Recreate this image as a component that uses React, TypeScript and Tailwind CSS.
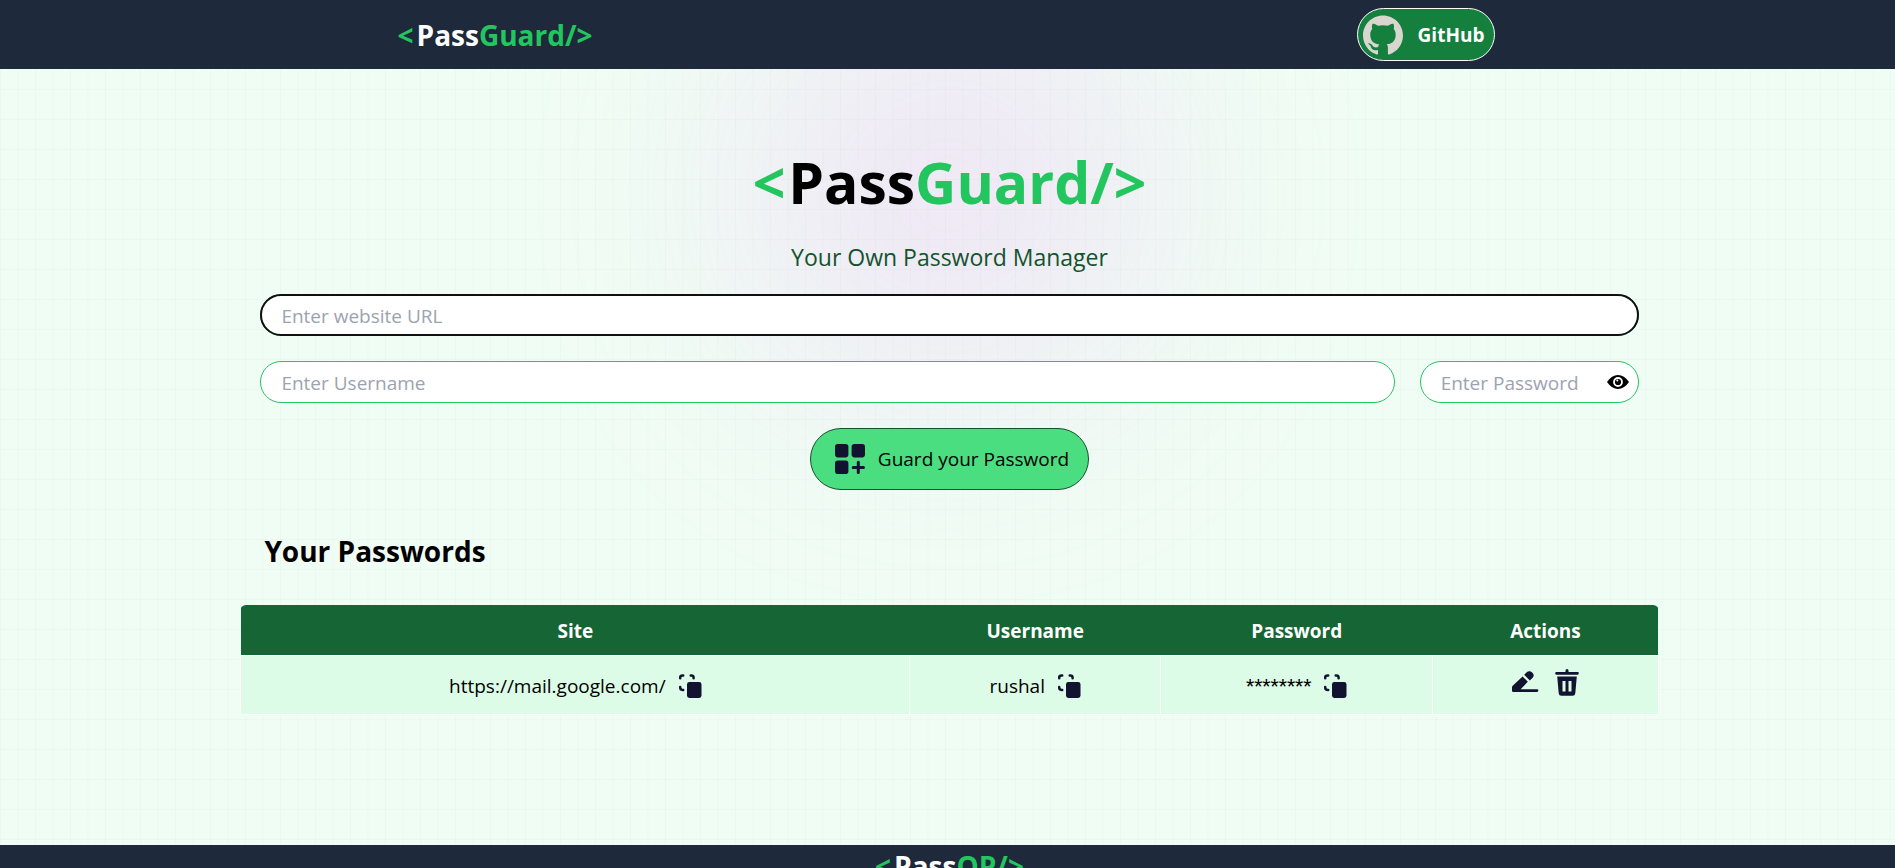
import { useState } from "react";
import { SiGithub } from "react-icons/si";

type Entry = { site: string; username: string; password: string };

const entries: Entry[] = [
  { site: "https://mail.google.com/", username: "rushal", password: "********" },
];

function EyeIcon() {
  return (
    <svg viewBox="0 0 22 14" className="h-[14px] w-[22px]" fill="black" aria-hidden="true">
      <path d="M0 7Q4.800 0 11 0t11 7q-4.800 7-11 7T0 7z" />
      <circle cx="11" cy="7" r="4" fill="black" stroke="white" strokeWidth="1.800" />
      <circle cx="10.300" cy="5.600" r="1" fill="white" />
    </svg>
  );
}

function CopyIcon() {
  return (
    <svg viewBox="0 0 24 26" className="h-[26px] w-6" fill="none" aria-hidden="true">
      <path
        d="M2.200 5.200V4.500Q2.200 2.400 4.500 2.400H5.200M12.700 2.400h.6Q15.600 2.400 15.600 4.500v.7M2.200 14v.6Q2.200 16.900 4.500 16.900h.7"
        stroke="#121331"
        strokeWidth="2.500"
        strokeLinecap="round"
      />
      <rect x="9" y="9" width="14.500" height="16" rx="2.400" fill="#121331" />
    </svg>
  );
}

function AddIcon() {
  return (
    <svg viewBox="0 0 30 30" className="h-[30px] w-[30px]" fill="#121331" aria-hidden="true">
      <rect width="13.400" height="13.400" rx="2.800" />
      <rect x="16.600" width="13.400" height="13.400" rx="2.800" />
      <rect y="16.600" width="13.400" height="13.400" rx="2.800" />
      <path d="M23.300 18.300v10.200M18.200 23.400h10.300" stroke="#121331" strokeWidth="3" strokeLinecap="round" />
    </svg>
  );
}

function EditIcon() {
  return (
    <svg viewBox="0 0 28 24" className="h-6 w-7" fill="#121331" aria-hidden="true">
      <path d="M11.600 6.400l5.200 5.400-7.200 7.400H26a1.400 1.400 0 0 1 0 2.800H2.200A1.200 1.200 0 0 1 1 20.800v-3.300q0-1 .7-1.700z" />
      <path d="M13.200 4.800l2.300-2.400a3.900 3.900 0 0 1 5.600 0l.3.300a3.900 3.900 0 0 1 0 5.400l-2.600 2.400z" />
    </svg>
  );
}

function TrashIcon() {
  return (
    <svg viewBox="0 0 24 27" className="h-[27px] w-6" fill="#121331" aria-hidden="true">
      <path d="M10.500 3V1.500a1.500 1.500 0 0 1 3 0V3h9a1.300 1.300 0 0 1 0 2.700h-21a1.300 1.300 0 0 1 0-2.700z" />
      <path
        fillRule="evenodd"
        d="M2.200 7.500h19.600l-1.500 16.700a2.800 2.800 0 0 1-2.800 2.500h-11a2.800 2.800 0 0 1-2.800-2.500zM7.500 12v10.500h3V12zM13.500 12v10.500h3V12z"
      />
    </svg>
  );
}

const field =
  "h-[42px] min-w-0 rounded-full bg-white pl-5 pt-[2px] text-[19px] text-black placeholder-[#9ca3af] border border-[#22c55e] outline-none";
const cell = "border border-white py-2 text-center";
const heading = "pb-[9px] pt-[11px]";

export default function App() {
  const [visible, setVisible] = useState(false);
  return (
    <div className="font-['Open_Sans','Noto_Sans',sans-serif] text-[19px] leading-[30px] text-black">
      <header className="bg-[#1e293b] pr-[2px] text-white">
        <div className="mx-auto flex h-[69px] w-[58%] items-center justify-between">
          <a href="#" className="text-[28px] font-bold leading-9">
            <span className="mr-[3px] text-[#22c55e]">&lt;</span>Pass
            <span className="text-[#22c55e]">Guard/&gt;</span>
          </a>
          <button className="flex h-[53px] items-center gap-[15px] rounded-full border border-white bg-[#15803d] pl-[5px] pr-[10px] font-bold">
            <SiGithub className="h-10 w-10 text-[#d9d6d0]" />
            GitHub
          </button>
        </div>
      </header>

      <main className="relative isolate min-h-[calc(100vh-92px)] overflow-hidden bg-[#f0fdf4] pl-1">
        <div className="absolute inset-0 -z-10 bg-[linear-gradient(to_right,#8080800a_1px,transparent_1px),linear-gradient(to_bottom,#8080800a_1px,transparent_1px)] bg-[size:17.5px_30px] bg-[position:0_20px]" />
        <div className="absolute inset-x-0 -top-[69px] -z-10 mx-auto h-[388px] w-[388px] rounded-full bg-[#e879f9] opacity-20 blur-[125px]" />

        <section className="mx-auto w-3/4 pt-[76px]">
          <div className="px-5">
            <h1 className="text-center text-[57px] font-bold leading-[75px]">
              <span className="mr-[3px] text-[#22c55e]">&lt;</span>Pass
              <span className="text-[#22c55e]">Guard/&gt;</span>
            </h1>
            <p className="mt-5 text-center text-[23px] leading-[35px] text-[#14532d]">
              Your Own Password Manager
            </p>
            <form className="mt-[19px] flex flex-col items-center gap-[25px]" onSubmit={(e) => e.preventDefault()}>
              <input
                aria-label="Website URL"
                placeholder="Enter website URL"
                className={`${field} w-full outline-2 outline-solid -outline-offset-2 outline-[#101010]`}
              />
              <div className="flex w-full gap-[25px]">
                <input aria-label="Username" placeholder="Enter Username" className={`${field} flex-1`} />
                <div className="relative w-[219px]">
                  <input
                    aria-label="Password"
                    type={visible ? "text" : "password"}
                    placeholder="Enter Password"
                    className={`${field} w-full pr-10`}
                  />
                  <button
                    type="button"
                    aria-label="Show password"
                    onClick={() => setVisible(!visible)}
                    className="absolute inset-y-0 right-[10px] flex items-center"
                  >
                    <EyeIcon />
                  </button>
                </div>
              </div>
              <button className="flex h-[62px] items-center gap-[13px] rounded-full border border-[#14532d] bg-[#4ade80] pl-6 pr-[19px]">
                <AddIcon />
                Guard your Password
              </button>
            </form>
          </div>

          <h2 className="mt-[41px] pl-6 text-[28px] font-bold leading-10">Your Passwords</h2>
          <table className="mt-[34px] w-full table-fixed border-collapse overflow-hidden rounded-md">
            <colgroup>
              <col className="w-[47.2%]" />
              <col className="w-[17.7%]" />
              <col className="w-[19.2%]" />
              <col className="w-[15.9%]" />
            </colgroup>
            <thead className="bg-[#166534] text-white">
              <tr>
                <th className={heading}>Site</th>
                <th className={heading}>Username</th>
                <th className={heading}>Password</th>
                <th className={heading}>Actions</th>
              </tr>
            </thead>
            <tbody className="bg-[#dcfce7]">
              {entries.map((entry) => (
                <tr key={entry.site} className="h-[59px]">
                  <td className={cell}>
                    <div className="flex items-center justify-center gap-3 pt-[2px]">
                      <span>{entry.site}</span>
                      <button aria-label="Copy site">
                        <CopyIcon />
                      </button>
                    </div>
                  </td>
                  <td className={cell}>
                    <div className="flex items-center justify-center gap-3 pt-[2px]">
                      <span>{entry.username}</span>
                      <button aria-label="Copy username">
                        <CopyIcon />
                      </button>
                    </div>
                  </td>
                  <td className={cell}>
                    <div className="flex items-center justify-center gap-3 pt-[2px]">
                      <span className="font-[Roboto,sans-serif]">{entry.password}</span>
                      <button aria-label="Copy password">
                        <CopyIcon />
                      </button>
                    </div>
                  </td>
                  <td className={cell}>
                    <div className="flex items-center justify-center gap-4 pb-[6px]">
                      <button aria-label="Edit">
                        <EditIcon />
                      </button>
                      <button aria-label="Delete">
                        <TrashIcon />
                      </button>
                    </div>
                  </td>
                </tr>
              ))}
            </tbody>
          </table>
        </section>
      </main>

      <footer className="bg-[#1e293b] pb-3 pl-1 text-center text-white">
        <div className="text-[28px] font-bold leading-[42px]">
          <span className="mr-[3px] text-[#22c55e]">&lt;</span>Pass
          <span className="text-[#22c55e]">OP/&gt;</span>
        </div>
      </footer>
    </div>
  );
}
